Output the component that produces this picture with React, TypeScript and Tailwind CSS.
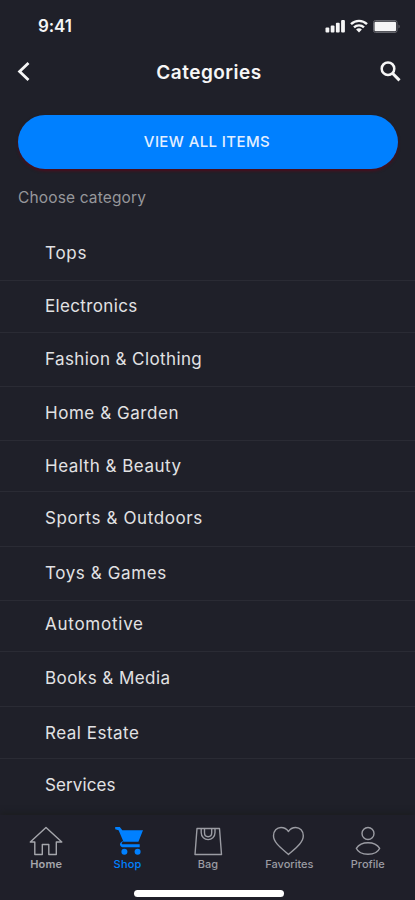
const font = "font-['Inter','Liberation_Sans',sans-serif]";

type Category = { name: string; row: string; text: string };

const categories: Category[] = [
  { name: "Tops", row: "h-[54px] pt-[14px]", text: "tracking-[0.75px]" },
  { name: "Electronics", row: "h-[52px] pt-[13px]", text: "tracking-[0.35px]" },
  { name: "Fashion & Clothing", row: "h-[54px] pt-[14px]", text: "tracking-[0.4px]" },
  { name: "Home & Garden", row: "h-[54px] pt-[14px]", text: "tracking-[0.55px]" },
  { name: "Health & Beauty", row: "h-[51px] pt-[13px]", text: "tracking-[0.5px]" },
  { name: "Sports & Outdoors", row: "h-[55px] pt-[14px]", text: "tracking-[0.6px]" },
  { name: "Toys & Games", row: "h-[54px] pt-[14px]", text: "tracking-[0.6px]" },
  { name: "Automotive", row: "h-[51px] pt-[11px]", text: "tracking-[0.75px]" },
  { name: "Books & Media", row: "h-[55px] pt-[14px]", text: "tracking-[0.45px]" },
  { name: "Real Estate", row: "h-[52px] pt-[14px]", text: "tracking-[0.5px]" },
  { name: "Services", row: "h-[56px] pt-[14px] border-transparent", text: "tracking-[0.1px]" },
];

function StatusBar() {
  return (
    <div className="flex h-[52px] shrink-0 items-center justify-between pl-[38px] pr-[14px] text-[#f5f5f6]">
      <span className="text-[17px] font-semibold leading-5 tracking-[-0.1px]">9:41</span>
      <div className="flex items-center gap-[4px]">
        <svg width="21" height="14" viewBox="0 0 21 14" fill="currentColor">
          <rect x="0.5" y="8.5" width="3.8" height="5" rx="1" />
          <rect x="5.7" y="6.5" width="3.8" height="7" rx="1" />
          <rect x="10.9" y="3.8" width="3.8" height="9.7" rx="1" />
          <rect x="16.1" y="1" width="3.8" height="12.5" rx="1" />
        </svg>
        <svg width="18" height="14" viewBox="0 0 18 14" fill="none" stroke="currentColor" strokeWidth="2.4">
          <path d="M1 5.2C5.5.8 12.5.8 17 5.2" />
          <path d="M4 8.4c2.8-2.7 7.2-2.7 10 0" />
          <path d="M6.1 10.4c1.6-1.4 4.2-1.4 5.8 0L9 13.4z" fill="currentColor" stroke="none" />
        </svg>
        <svg width="29" height="13" viewBox="0 0 29 13">
          <rect x="1.5" y="0.5" width="23.5" height="12" rx="2" fill="none" stroke="#66676e" />
          <rect x="2.5" y="1.7" width="21.5" height="9.6" rx="1" fill="currentColor" />
          <path d="M26.5 4.5c1.6.7 1.6 3.3 0 4z" fill="#66676e" />
        </svg>
      </div>
    </div>
  );
}

function Header() {
  return (
    <header className="grid h-[63px] shrink-0 grid-cols-[60px_1fr_60px] items-start text-[#f6f6f6]">
      <button aria-label="Back" className="pl-[16px] pt-[9px]">
        <svg width="16" height="22" viewBox="0 0 16 22" fill="none" stroke="currentColor" strokeWidth="2.8">
          <path d="M12.5 2 3.6 10.5 12.5 19" />
        </svg>
      </button>
      <h1 className="pl-[3px] pt-[9px] text-center text-[19px] font-semibold leading-6 tracking-[0.5px]">Categories</h1>
      <button aria-label="Search" className="pl-[24px] pt-[8px]">
        <svg width="24" height="24" viewBox="0 0 24 24" fill="none" stroke="currentColor" strokeWidth="2.5">
          <circle cx="9" cy="8.7" r="6.3" />
          <path d="m13.5 13.2 7 7.2" strokeWidth="3" />
        </svg>
      </button>
    </header>
  );
}

function HomeIcon() {
  return (
    <svg width="36" height="31" viewBox="0 0 36 31" fill="none" stroke="currentColor" strokeWidth="1.4" strokeLinejoin="round">
      <path d="M17 1.5 1.3 16h4.5v12.5h7.5v-10h6.5v10h7.5V16h5.5z" />
    </svg>
  );
}

function ShopIcon() {
  return (
    <svg width="36" height="31" viewBox="0 0 36 31" fill="currentColor">
      <path d="M5.2 1h4.6l2.5 3.2H33l-4.6 11.5H13.5L8.6 4.2 5.2 3.2z" />
      <path d="M13.5 15.7c-2 .8-2.3 1.6-1.3 2.5h17.5v3H12.3c-3-1-3.2-4.5.2-6z" />
      <circle cx="14.4" cy="25.8" r="3" />
      <circle cx="27.6" cy="25.8" r="3" />
    </svg>
  );
}

function BagIcon() {
  return (
    <svg width="36" height="31" viewBox="0 0 36 31" fill="none" stroke="currentColor" strokeWidth="1.4" strokeLinejoin="round">
      <path d="M7 2.5h22.5l2 26H5z" />
      <path d="M11.2 2.5v4c0 9.5 13.8 9.5 13.8 0v-4M14.5 2.5v4.3c0 5.2 7.2 5.2 7.2 0V2.5" />
    </svg>
  );
}

function HeartIcon() {
  return (
    <svg width="36" height="31" viewBox="0 0 36 31" fill="none" stroke="currentColor" strokeWidth="1.4" strokeLinejoin="round">
      <path d="M18.5 28.5C11 22 3.5 16.5 3.5 9.8c0-5 3.3-8.3 7.5-8.3 3.300 0 5.800 1.500 7.500 4 1.500-2.500 4-4 7.300-4 4.200 0 7.500 3.300 7.500 8.300 0 6.700-7.300 12.200-14.800 18.700z" />
    </svg>
  );
}

function ProfileIcon() {
  return (
    <svg width="36" height="31" viewBox="0 0 36 31" fill="none" stroke="currentColor" strokeWidth="1.4">
      <circle cx="17" cy="7.5" r="6" />
      <path d="M5.3 22.3c5-7.5 18.4-7.5 23.4 0-3.5 8-19.9 8-23.4 0z" strokeLinejoin="round" />
    </svg>
  );
}

const tabs = [
  { label: "Home", icon: HomeIcon, style: "text-[#a5a6ac]", text: "mr-[2px] font-semibold tracking-[0.2px]" },
  { label: "Shop", icon: ShopIcon, style: "text-[#0080ff]", text: "tracking-[0.2px]" },
  { label: "Bag", icon: BagIcon, style: "text-[#9b9ca3]", text: "" },
  { label: "Favorites", icon: HeartIcon, style: "text-[#9b9ca3]", text: "ml-[2px]" },
  { label: "Profile", icon: ProfileIcon, style: "text-[#9b9ca3]", text: "mr-[2px]" },
];

function TabBar() {
  return (
    <nav className="flex flex-1 flex-col items-center bg-[#1f1f29] shadow-[0_-3px_5px_rgba(28,29,31,0.8)]">
      <div className="grid w-full grid-cols-5 pl-[7px] pr-[6px] pt-[11px]">
        {tabs.map(({ label, icon: Icon, style, text }) => (
          <button key={label} className={"flex flex-col items-center " + style}>
            <Icon />
            <span className={"text-[11px] font-medium leading-[14px] " + text}>{label}</span>
          </button>
        ))}
      </div>
      <div className="ml-[2px] mt-[19px] h-[7px] w-[150px] rounded-full bg-white" />
    </nav>
  );
}

export default function App() {
  return (
    <div className={"flex h-[900px] w-[415px] flex-col overflow-hidden bg-[#1f2029] " + font}>
      <StatusBar />
      <Header />
      <button className="ml-[18px] mr-[17px] h-[54px] shrink-0 rounded-full bg-[#0080ff] pr-[2px] text-[15px] font-medium tracking-[0.4px] text-[#e3efff] shadow-[0_2px_3px_rgba(90,8,25,0.8)]">
        VIEW ALL ITEMS
      </button>
      <p className="mt-[19px] pl-[18px] text-[15.5px] leading-5 tracking-[0.15px] text-[#96979b]">Choose category</p>
      <ul className="mt-[19px] shrink-0">
        {categories.map((c) => (
          <li key={c.name} className={"border-b border-[#2a2b34] pl-[45px] text-[17px] leading-6 text-[#e2e2e4] " + c.row}>
            <span className={c.text}>{c.name}</span>
          </li>
        ))}
      </ul>
      <TabBar />
    </div>
  );
}
